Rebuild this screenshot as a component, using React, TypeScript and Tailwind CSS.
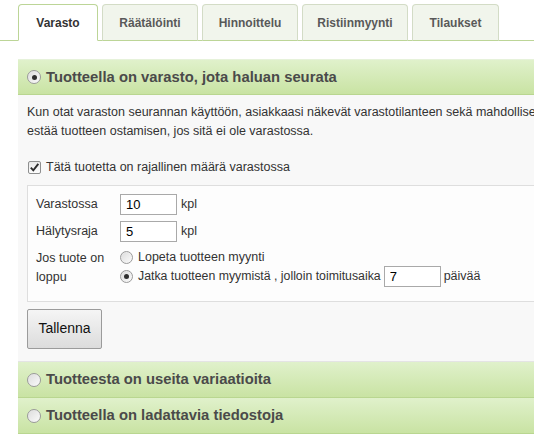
import React from 'react';

const tabs = [
  { label: 'Varasto', w: 'w-[80px]', active: true },
  { label: 'Räätälöinti', w: 'w-[96px]' },
  { label: 'Hinnoittelu', w: 'w-[96px]' },
  { label: 'Ristiinmyynti', w: 'w-[106px]' },
  { label: 'Tilaukset', w: 'w-[87px]' },
];

const Radio: React.FC<{ checked?: boolean; big?: boolean }> = ({ checked, big }) => (
  <span
    className={`relative inline-flex shrink-0 items-center justify-center rounded-full border border-[#9a9a9a] bg-gradient-to-br from-[#dcdcdc] to-[#fbfbfb] shadow-[inset_0_0_1px_#fff] ${
      big ? 'h-[14px] w-[14px]' : 'h-[13px] w-[13px]'
    }`}
  >
    {checked && <span className="h-[5px] w-[5px] rounded-full bg-[#2f2f2f]" />}
  </span>
);

const Checkbox: React.FC = () => (
  <span className="inline-flex h-[13px] w-[13px] shrink-0 items-center justify-center rounded-[2px] border border-[#8e8f8f] bg-gradient-to-b from-[#e8e8e8] to-[#fdfdfd]">
    <svg width="11" height="11" viewBox="0 0 11 11">
      <path d="M1.8 5.6 L4.3 8.3 L9.3 1.8" fill="none" stroke="#2b2b2b" strokeWidth="1.9" />
    </svg>
  </span>
);

const SectionHeader: React.FC<{ title: string; checked?: boolean; top?: boolean }> = ({ title, checked, top }) => (
  <div
    className={`flex h-[36px] items-center gap-[5px] pl-[9px] bg-gradient-to-b from-[#e0f1cb] to-[#c9e3a3] border-b border-[#b9d690] ${
      top ? 'border-t border-t-[#e6f2da]' : ''
    }`}
  >
    <Radio checked={checked} big />
    <span className="text-[14.8px] font-bold text-[#4a4a4a]">{title}</span>
  </div>
);

const TextBox: React.FC<{ value: string }> = ({ value }) => (
  <input
    readOnly
    value={value}
    className="h-[21px] w-[57px] border border-[#a9a9a9] bg-white pl-[5px] text-[13px] text-black outline-none"
  />
);

export default function App() {
  return (
    <div className="h-[438px] w-[534px] overflow-hidden bg-white font-['Liberation_Sans',Arial,sans-serif] text-[#333]">
      {/* tabs */}
      <div className="flex gap-[4px] border-b border-[#bcd597] pl-[18px] pt-[4px]">
        {tabs.map(t => (
          <div
            key={t.label}
            className={`-mb-px flex h-[37px] ${t.w} items-center justify-center rounded-t-[4px] border text-[12px] font-bold ${
              t.active
                ? 'border-[#bcd597] border-b-white bg-white text-[#333]'
                : 'border-[#d3dcc6] border-b-[#bcd597] bg-[#f1f5ec] text-[#595959]'
            }`}
          >
            {t.label}
          </div>
        ))}
      </div>

      <div className="ml-[18px] mt-[18px] w-[640px]">
        <SectionHeader title="Tuotteella on varasto, jota haluan seurata" checked top />

        <div className="h-[267px] border-b border-[#e4e4e4] bg-[#f8f8f8] pl-[9px] pt-[8px]">
          <p className="whitespace-nowrap text-[12.5px] leading-[19px] text-[#333]">
            Kun otat varaston seurannan käyttöön, asiakkaasi näkevät varastotilanteen sekä mahdollisen toimitusajan. Varaston loppuminen
            <br />
            estää tuotteen ostamisen, jos sitä ei ole varastossa.
          </p>

          <label className="mt-[17px] flex items-center gap-[5px] pl-px text-[12.5px] text-[#333]">
            <Checkbox />
            Tätä tuotetta on rajallinen määrä varastossa
          </label>

          <div className="mt-[8px] border border-[#dedede] bg-[#fdfdfd] pb-[14px] pl-[8px] pt-[8px] text-[12.5px] text-[#333]">
            <div className="flex items-center">
              <span className="w-[84px]">Varastossa</span>
              <TextBox value="10" />
              <span className="ml-[4px]">kpl</span>
            </div>
            <div className="mt-[6px] flex items-center">
              <span className="w-[84px]">Hälytysraja</span>
              <TextBox value="5" />
              <span className="ml-[4px]">kpl</span>
            </div>
            <div className="mt-[6px] flex items-start leading-[19px]">
              <span className="w-[84px] pt-[1px]">Jos tuote on loppu</span>
              <div className="flex flex-col">
                <div className="flex h-[19px] items-center gap-[5px]">
                  <Radio />
                  <span>Lopeta tuotteen myynti</span>
                </div>
                <div className="flex h-[19px] items-center gap-[3px]">
                  <Radio checked />
                  <span className="pl-[2px] text-[12.3px]">Jatka tuotteen myymistä , jolloin toimitusaika</span>
                  <TextBox value="7" />
                  <span>päivää</span>
                </div>
              </div>
            </div>
          </div>

          <button className="mt-[7px] h-[40px] w-[75px] rounded-[2px] border border-[#9b9b9b] bg-gradient-to-b from-[#f5f5f5] to-[#dcdcdc] text-[14px] text-[#111]">
            Tallenna
          </button>
        </div>

        <SectionHeader title="Tuotteesta on useita variaatioita" />
        <SectionHeader title="Tuotteella on ladattavia tiedostoja" />
      </div>
    </div>
  );
}
